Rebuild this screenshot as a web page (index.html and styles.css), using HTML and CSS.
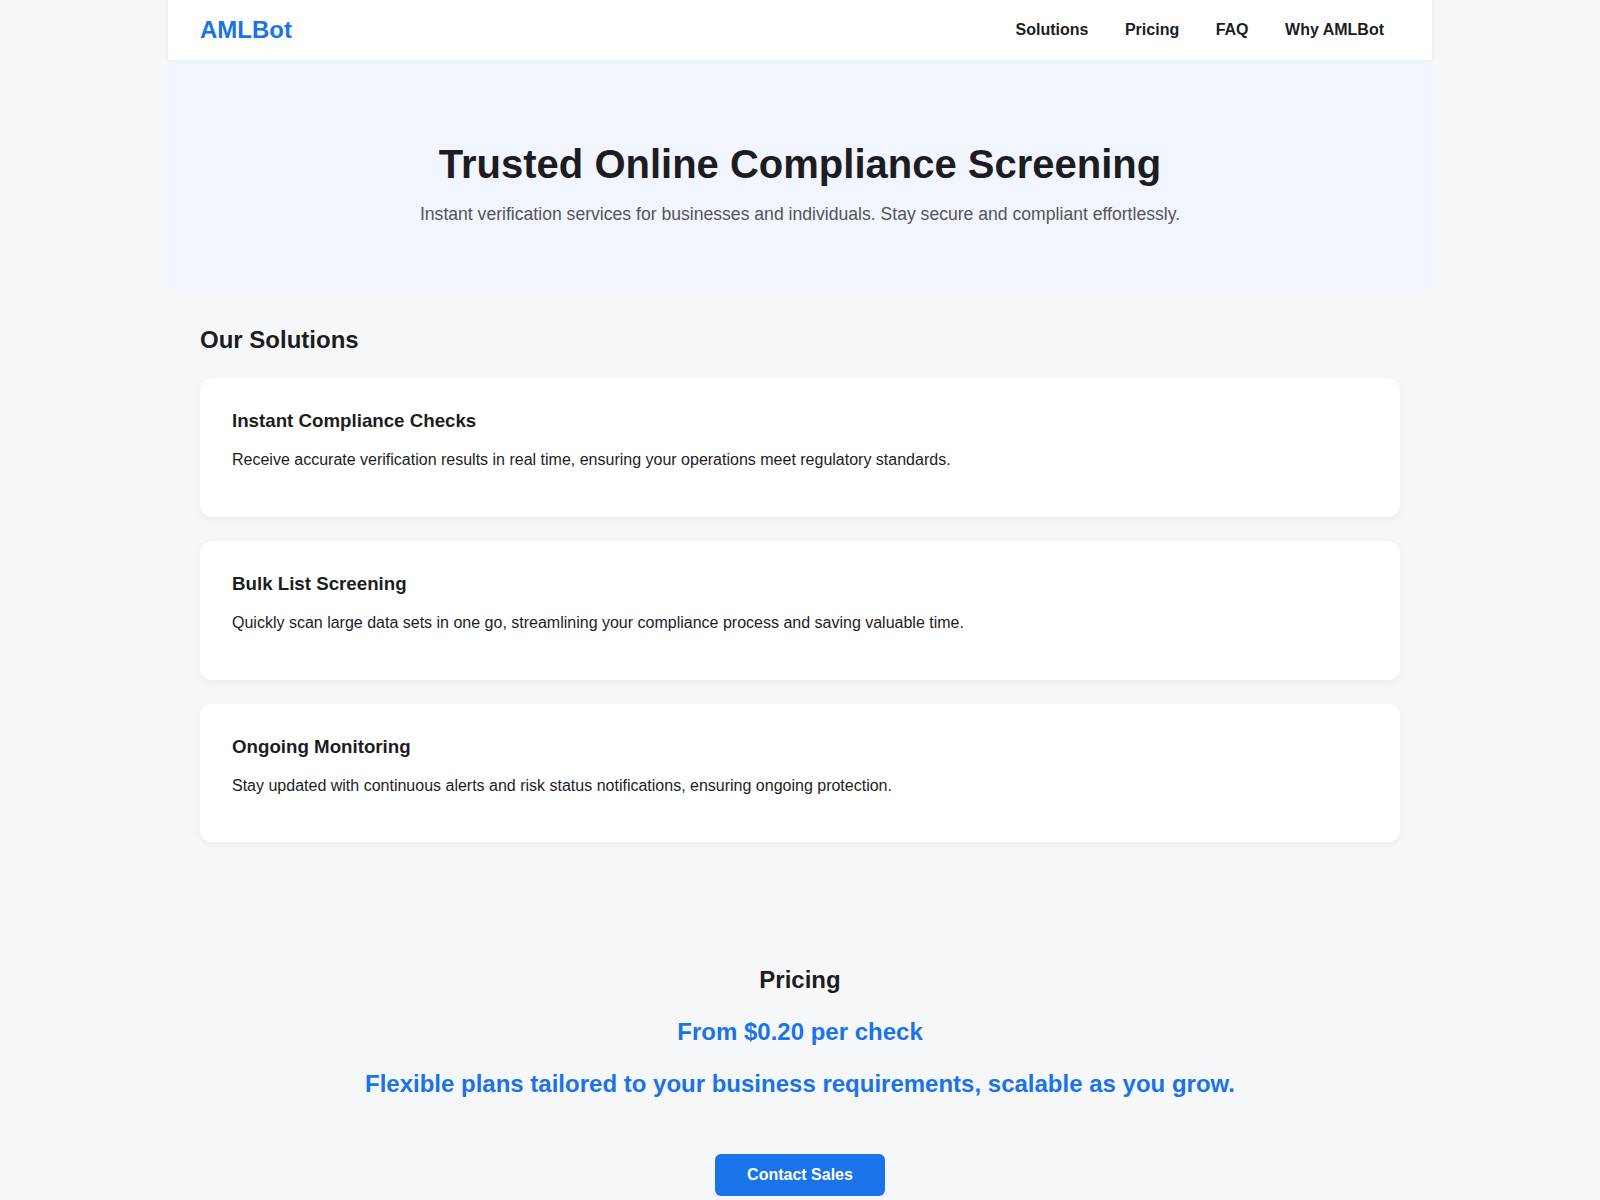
FILE: index.html
```html
<!DOCTYPE html>
<html lang="en">
<head>
<meta charset="utf-8">
<title>AMLBot — Trusted Online Compliance Screening</title>
<link rel="stylesheet" href="styles.css">
</head>
<body>
<div class="page">
  <header class="site-header">
    <div class="logo">AMLBot</div>
    <nav class="nav">
      <a href="#solutions">Solutions</a>
      <a href="#pricing">Pricing</a>
      <a href="#faq">FAQ</a>
      <a href="#why">Why AMLBot</a>
    </nav>
  </header>

  <section class="hero">
    <h1>Trusted Online Compliance Screening</h1>
    <p>Instant verification services for businesses and individuals. Stay secure and compliant effortlessly.</p>
  </section>

  <section class="solutions" id="solutions">
    <h2>Our Solutions</h2>
    <div class="cards">
      <div class="card">
        <h3>Instant Compliance Checks</h3>
        <p>Receive accurate verification results in real time, ensuring your operations meet regulatory standards.</p>
      </div>
      <div class="card">
        <h3>Bulk List Screening</h3>
        <p>Quickly scan large data sets in one go, streamlining your compliance process and saving valuable time.</p>
      </div>
      <div class="card">
        <h3>Ongoing Monitoring</h3>
        <p>Stay updated with continuous alerts and risk status notifications, ensuring ongoing protection.</p>
      </div>
    </div>
  </section>

  <section class="pricing" id="pricing">
    <h2>Pricing</h2>
    <p class="price">From $0.20 per check</p>
    <p class="plans">Flexible plans tailored to your business requirements, scalable as you grow.</p>
    <a class="btn" href="#contact">Contact Sales</a>
  </section>
</div>
</body>
</html>
```
FILE: styles.css
```css
* { box-sizing: border-box; }

html, body {
  margin: 0;
  padding: 0;
}

body {
  background: #f6f7f9;
  color: #1d1d1f;
  font-family: "Liberation Sans", Arial, sans-serif;
}

.page {
  max-width: 1264px;
  margin: 0 auto;
}

.site-header {
  height: 60px;
  background: #ffffff;
  padding: 0 32px;
  display: flex;
  align-items: center;
  justify-content: space-between;
  box-shadow: 0 0 6px rgba(0, 0, 0, 0.06);
  position: relative;
  z-index: 1;
}

.logo {
  font-size: 24px;
  font-weight: 700;
  color: #1a73e8;
}

.nav {
  display: flex;
  gap: 36.5px;
  padding-right: 16px;
}

.nav a {
  font-size: 16px;
  font-weight: 700;
  color: #1d1d1f;
  text-decoration: none;
}

.hero {
  background: #f0f5ff;
  text-align: center;
  padding: 82px 32px 65px;
}

.hero h1 {
  margin: 0 0 17px;
  font-size: 40px;
  font-weight: 700;
  color: #1d1d1f;
}

.hero p {
  margin: 0;
  font-size: 17.6px;
  color: #555555;
}

.solutions {
  padding: 36px 32px 56px;
}

.solutions h2 {
  margin: 0 0 24px;
  font-size: 24px;
  font-weight: 700;
}

.cards {
  display: flex;
  flex-direction: column;
  gap: 24px;
}

.card {
  background: #ffffff;
  border-radius: 12px;
  padding: 32px;
  box-shadow: 0 2px 8px rgba(0, 0, 0, 0.05);
}

.card h3 {
  margin: 0 0 18px;
  font-size: 18.72px;
  font-weight: 700;
}

.card p {
  margin: 0 0 14px;
  font-size: 16px;
  line-height: 1.3;
  color: #1d1d1f;
}

.pricing {
  padding: 68px 32px 40px;
  text-align: center;
}

.pricing h2 {
  margin: 0 0 24px;
  font-size: 24px;
  font-weight: 700;
}

.pricing .price {
  margin: 0 0 24px;
  font-size: 24px;
  font-weight: 700;
  color: #1a73e8;
}

.pricing .plans {
  margin: 0 0 56px;
  font-size: 24px;
  font-weight: 700;
  color: #1a73e8;
}

.btn {
  display: inline-block;
  background: #1a73e8;
  color: #ffffff;
  font-size: 16px;
  font-weight: 700;
  text-decoration: none;
  padding: 12px 32px;
  border-radius: 6px;
}
```
